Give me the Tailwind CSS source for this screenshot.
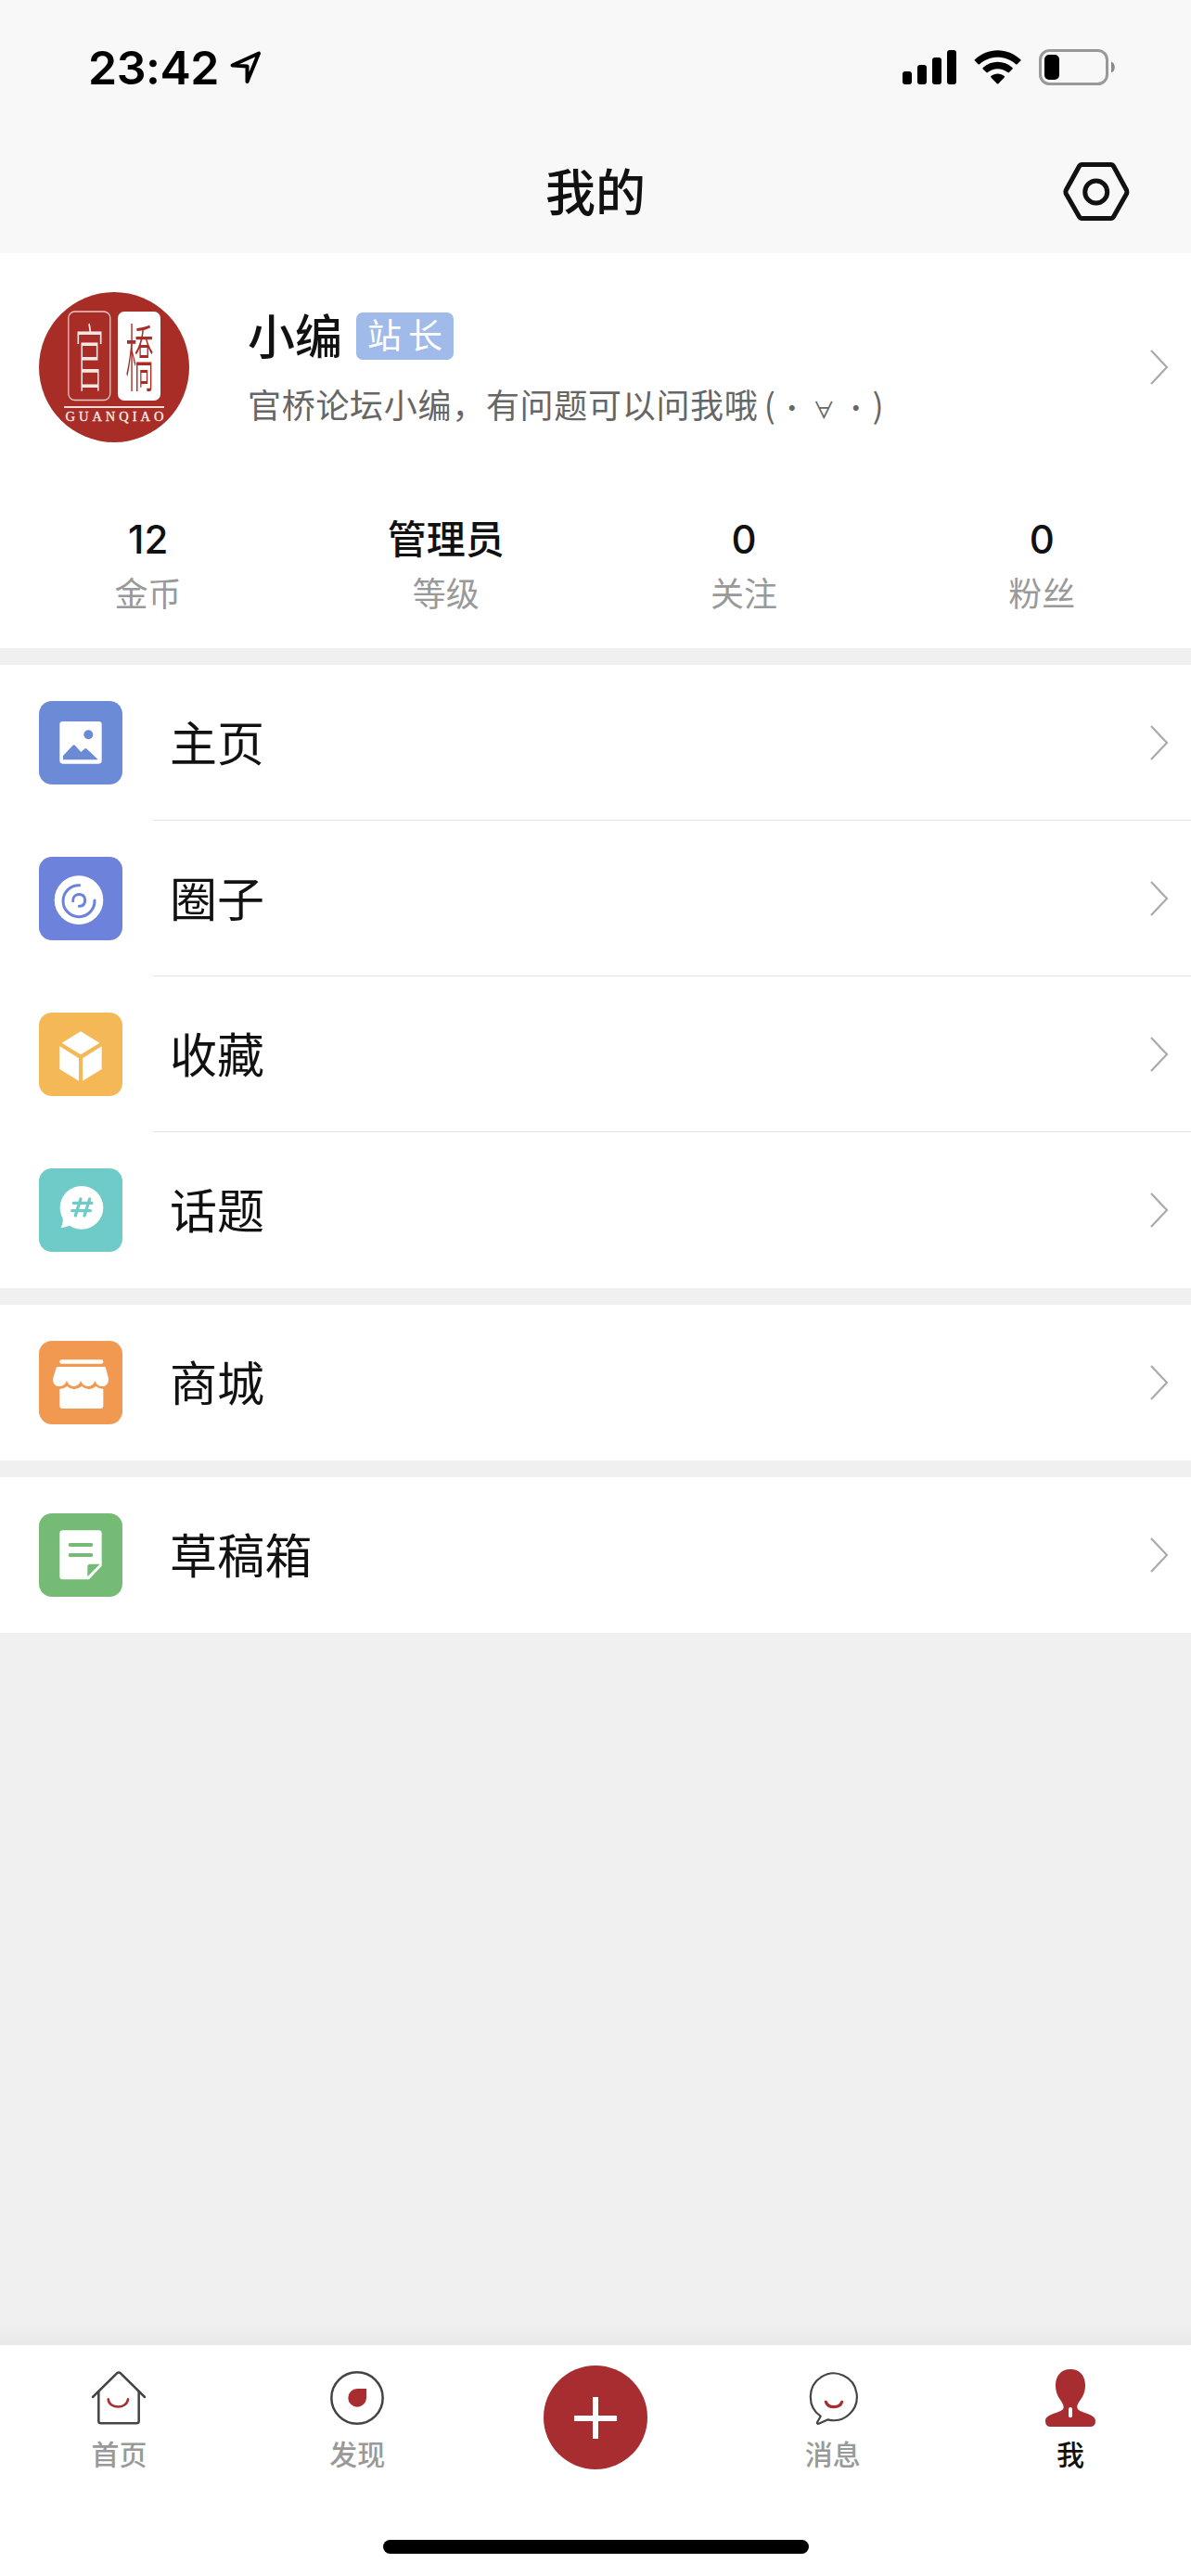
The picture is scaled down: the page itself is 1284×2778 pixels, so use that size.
<!DOCTYPE html>
<html lang="zh-CN">
<head>
  <meta charset="UTF-8" />
  <meta name="viewport" content="width=device-width, initial-scale=1.0" />
  <title>我的</title>
  <script src="https://cdn.jsdelivr.net/npm/@tailwindcss/browser@4"></script>
</head>
<body class="w-[1284px] h-[2778px] flex flex-col overflow-hidden bg-[#f0f0f0] text-[#111111] font-['Inter','Noto_Sans_CJK_SC',sans-serif]">

  <!-- Status bar + title -->
  <header class="h-[273px] shrink-0 bg-[#f8f8f8]">
    <div class="h-[141px] flex justify-between items-start pt-[53px] pl-[95px] pr-[81px] text-black">
      <div class="flex items-start">
        <span class="w-[153px] text-[50px] leading-[40px] tracking-[-0.5px] font-semibold whitespace-nowrap">23:42</span>
        <svg class="w-[34px] h-[36px] mt-[2px]" viewBox="0 0 34 36" fill="none" stroke="currentColor" stroke-width="4" stroke-linejoin="round" stroke-linecap="round">
          <path d="M2.5 15.5 31 2.5 18.5 33 18.5 16.5Z" />
        </svg>
      </div>
      <div class="flex items-start">
        <svg class="w-[58px] h-[38px] mt-px" viewBox="0 0 58 38" fill="currentColor">
          <rect x="0" y="23" width="10" height="14" rx="3" />
          <rect x="16" y="16" width="10" height="21" rx="3" />
          <rect x="32" y="8" width="10" height="29" rx="3" />
          <rect x="48" y="0" width="10" height="37" rx="3" />
        </svg>
        <svg class="w-[52px] h-[38px] mt-px ml-[19px]" viewBox="0 0 52 38" fill="currentColor">
          <path d="M.9 10.2C14.8-3.2 36.4-3.2 50.3 10.2Q51 10.900 50.3 11.6L46.6 15.2Q45.9 15.8 45.2 15.2C34.5 5.2 16.7 5.2 6 15.2Q5.3 15.8 4.6 15.2L.9 11.6Q.2 10.9 .9 10.2Z" />
          <path d="M9.7 19.1C18.7 10.7 32.5 10.7 41.5 19.1Q42.2 19.8 41.5 20.5L37.8 24.1Q37.1 24.7 36.4 24.1C30.4 18.9 20.8 18.9 14.8 24.1Q14.1 24.7 13.4 24.1L9.7 20.5Q9 19.8 9.7 19.1Z" />
          <path d="M18.4 28C22.5 24.6 28.7 24.6 32.8 28Q33.5 28.7 32.8 29.4L26.3 36.2Q25.6 36.9 24.9 36.2L18.4 29.4Q17.7 28.7 18.4 28Z" />
        </svg>
        <svg class="w-[83px] h-[39px] ml-[18px]" viewBox="0 0 83 39">
          <rect x="1.5" y="1.5" width="72" height="36" rx="10" fill="none" stroke="#999999" stroke-width="3" />
          <rect x="6" y="6" width="16" height="27" rx="5" fill="#000000" />
          <path d="M78 13.5C83 15 83 24 78 25.5Z" fill="#8a8a8a" />
        </svg>
      </div>
    </div>
    <div class="relative h-[132px] flex items-center justify-center">
      <h1 class="text-[54px] leading-[80px] font-medium mt-[3px]">我的</h1>
      <svg class="absolute right-[66px] top-[33px] w-[72px] h-[66px]" viewBox="0 0 72 66" fill="none" stroke="#111111" stroke-width="5" stroke-linejoin="round">
        <path d="M20.5 3.5H51.5Q53.5 3.5 54.5 5.2L68.5 31Q69.2 33 68.5 35L54.5 59.8Q53.5 61.5 51.5 61.5H20.5Q18.5 61.5 17.5 59.8L3.3 35Q2.5 33 3.3 31L17.5 5.2Q18.5 3.5 20.5 3.5Z" />
        <circle cx="35.7" cy="33" r="12" />
      </svg>
    </div>
  </header>

  <!-- Profile -->
  <section class="h-[426px] shrink-0 bg-white">
    <div class="flex items-center h-[246px] pt-[42px] pb-[42px] pl-[42px] pr-[24px]">
      <svg class="w-[162px] h-[162px] shrink-0" viewBox="0 0 162 162">
        <circle cx="81" cy="81" r="81" fill="#a82d26" />
        <rect x="31.8" y="21" width="45" height="95.5" rx="7" fill="none" stroke="#e9c9c5" stroke-width="1.3" />
        <rect x="85" y="21" width="46" height="96" rx="7" fill="#ffffff" />
        <g font-family="Noto Sans CJK TC" font-weight="300" text-anchor="middle">
          <text transform="translate(54.5 100.500) scale(1 2.550)" font-size="31" fill="#f7e6e4">官</text>
          <text transform="translate(108.500 100.500) scale(.98 2.550)" font-size="31" fill="#a82d26">橋</text>
        </g>
        <path d="M27 124H135" stroke="#f3dedc" stroke-width="1.8" />
        <text x="28.500" y="138.500" font-family="Liberation Serif" font-size="14.500" fill="#f9eeed" stroke="#f9eeed" stroke-width=".3" textLength="106">GUANQIAO</text>
      </svg>
      <div class="ml-[63px] pt-[10px] flex-1">
        <div class="flex items-center h-[51px]">
          <span class="text-[51px] leading-[51px] font-medium pt-[2px]">小编</span>
          <span class="ml-[15px] w-[105px] h-[51px] rounded-[7px] bg-[#a0bbea] text-white text-[37px] leading-[52px] tracking-[7px] pl-[12px] whitespace-nowrap">站长</span>
        </div>
        <p class="mt-[22px] text-[36px] leading-[51px] tracking-[0.7px] text-[#666666] whitespace-nowrap font-['Noto_Sans_CJK_SC',sans-serif]">官桥论坛小编，有问题可以问我哦<span class="inline-block w-[19px] text-right">(</span><span class="inline-block w-[35px] text-center text-[28px]">・</span><span class="inline-block w-[34px] text-center text-[24px]">∀</span><span class="inline-block w-[35px] text-center text-[28px]">・</span>)</p>
      </div>
      <svg class="w-[20px] h-[38px]" viewBox="0 0 20 38" fill="none" stroke="#aaaaaa" stroke-width="2.2"><path d="M1 1 18 19 1 37" /></svg>
    </div>
    <div class="grid grid-cols-4 text-center pt-[36px] -ml-px">
      <div>
        <div class="text-[42px] leading-[54px] font-medium">12</div>
        <div class="text-[36px] leading-[54px] mt-[5px] text-[#999999]">金币</div>
      </div>
      <div>
        <div class="text-[42px] leading-[54px] font-medium">管理员</div>
        <div class="text-[36px] leading-[54px] mt-[5px] text-[#999999]">等级</div>
      </div>
      <div>
        <div class="text-[42px] leading-[54px] font-medium">0</div>
        <div class="text-[36px] leading-[54px] mt-[5px] text-[#999999]">关注</div>
      </div>
      <div>
        <div class="text-[42px] leading-[54px] font-medium">0</div>
        <div class="text-[36px] leading-[54px] mt-[5px] text-[#999999]">粉丝</div>
      </div>
    </div>
  </section>

  <!-- Menu -->
  <section class="mt-[18px] bg-white shrink-0">
    <a class="flex items-center h-[168px] pl-[42px]">
      <svg class="w-[90px] h-[90px] rounded-[14px] bg-[#6c8bd6]" viewBox="0 0 270 270">
        <rect x="67" y="66" width="136" height="137" rx="10" fill="#ffffff" />
        <circle cx="160" cy="109" r="15" fill="#6c8bd6" />
        <path d="M78 190V177L109 144Q113 140 117 144L136 165 147 155Q151 151 155 155L190 188 189 190Z" fill="#6c8bd6" />
      </svg>
      <div class="ml-[33px] flex-1 h-full flex items-center justify-between pr-[24px] border-b border-[#e4e4e4]">
        <span class="ml-[18px] pt-[4px] text-[51px] leading-[60px]">主页</span>
        <svg class="w-[20px] h-[38px]" viewBox="0 0 20 38" fill="none" stroke="#aaaaaa" stroke-width="2.2"><path d="M1 1 18 19 1 37" /></svg>
      </div>
    </a>
    <a class="flex items-center h-[168px] pl-[42px]">
      <svg class="w-[90px] h-[90px] rounded-[14px] bg-[#6d82da]" viewBox="0 0 270 270" fill="none" stroke="#6d82da" stroke-width="9" stroke-linecap="round">
        <circle cx="129" cy="140" r="79" fill="#ffffff" stroke="none" />
        <path d="M131 92A51 51 0 1 0 180 141" />
        <path d="M110 143C108 116 149 113 149 140Q149 159 130 160" />
      </svg>
      <div class="ml-[33px] flex-1 h-full flex items-center justify-between pr-[24px] border-b border-[#e4e4e4]">
        <span class="ml-[18px] pt-[4px] text-[51px] leading-[60px]">圈子</span>
        <svg class="w-[20px] h-[38px]" viewBox="0 0 20 38" fill="none" stroke="#aaaaaa" stroke-width="2.2"><path d="M1 1 18 19 1 37" /></svg>
      </div>
    </a>
    <a class="flex items-center h-[168px] pl-[42px]">
      <svg class="w-[90px] h-[90px] rounded-[14px] bg-[#f4b956]" viewBox="0 0 270 270" fill="#ffffff">
        <path d="M135 61 196 98 135 136 74 98Z" />
        <path d="M67 109 129 148V221L67 183Z" />
        <path d="M141 148 203 109V183L141 221Z" />
      </svg>
      <div class="ml-[33px] flex-1 h-full flex items-center justify-between pr-[24px] border-b border-[#e4e4e4]">
        <span class="ml-[18px] pt-[4px] text-[51px] leading-[60px]">收藏</span>
        <svg class="w-[20px] h-[38px]" viewBox="0 0 20 38" fill="none" stroke="#aaaaaa" stroke-width="2.2"><path d="M1 1 18 19 1 37" /></svg>
      </div>
    </a>
    <a class="flex items-center h-[168px] pl-[42px]">
      <svg class="w-[90px] h-[90px] rounded-[14px] bg-[#6ecbc7]" viewBox="0 0 270 270">
        <circle cx="138" cy="127" r="70" fill="#ffffff" />
        <path d="M77 160Q79 176 71 193 85 190 100 185L110 165Z" fill="#ffffff" />
        <path d="M135 99 118 153M164 99 147 153M112 112H171M107 137H166" fill="none" stroke="#6ecbc7" stroke-width="10" stroke-linecap="round" />
      </svg>
      <div class="ml-[33px] flex-1 h-full flex items-center justify-between pr-[24px]">
        <span class="ml-[18px] pt-[3px] text-[51px] leading-[60px]">话题</span>
        <svg class="w-[20px] h-[38px]" viewBox="0 0 20 38" fill="none" stroke="#aaaaaa" stroke-width="2.2"><path d="M1 1 18 19 1 37" /></svg>
      </div>
    </a>
  </section>

  <section class="mt-[18px] bg-white shrink-0">
    <a class="flex items-center h-[168px] pl-[42px]">
      <svg class="w-[90px] h-[90px] rounded-[14px] bg-[#f19950]" viewBox="0 0 270 270" fill="#ffffff">
        <rect x="67" y="61" width="141" height="13" rx="6" />
        <path d="M57 84H215L225 122C227 153 189 156 181 128 175 153 143 153 135 128 128 153 97 153 90 128 81 156 43 153 45 122Z" />
        <path d="M67 156Q80 156 91 147 113 166 138 147 163 166 184 147 195 156 208 156V210Q208 219 199 219H76Q67 219 67 210Z" />
      </svg>
      <div class="ml-[33px] flex-1 h-full flex items-center justify-between pr-[24px]">
        <span class="ml-[18px] pt-[3px] text-[51px] leading-[60px]">商城</span>
        <svg class="w-[20px] h-[38px]" viewBox="0 0 20 38" fill="none" stroke="#aaaaaa" stroke-width="2.2"><path d="M1 1 18 19 1 37" /></svg>
      </div>
    </a>
  </section>

  <section class="mt-[18px] bg-white shrink-0">
    <a class="flex items-center h-[168px] pl-[42px]">
      <svg class="w-[90px] h-[90px] rounded-[14px] bg-[#76bb75]" viewBox="0 0 270 270">
        <path d="M77 55H193Q203 55 203 65V170L162 214H77Q67 214 67 204V65Q67 55 77 55Z" fill="#ffffff" />
        <path d="M157 205V173Q157 164 166 164H197Z" fill="#76bb75" />
        <path d="M101 102H169M101 135H169" fill="none" stroke="#76bb75" stroke-width="12" stroke-linecap="round" />
      </svg>
      <div class="ml-[33px] flex-1 h-full flex items-center justify-between pr-[24px]">
        <span class="ml-[18px] pt-[3px] text-[51px] leading-[60px] tracking-[0.3px]">草稿箱</span>
        <svg class="w-[20px] h-[38px]" viewBox="0 0 20 38" fill="none" stroke="#aaaaaa" stroke-width="2.2"><path d="M1 1 18 19 1 37" /></svg>
      </div>
    </a>
  </section>

  <!-- Tab bar -->
  <div class="mt-auto h-[24px] shrink-0 bg-linear-to-b from-[#f0f0f0] to-[#e9e9e9]"></div>
  <nav class="h-[249px] shrink-0 bg-white flex flex-col items-center justify-between pb-[24px]">
    <div class="w-full grid grid-cols-5 text-center text-[30px] leading-[40px] font-medium text-[#999999]">
      <a class="flex flex-col items-center pt-[26px]">
        <svg class="w-[60px] h-[62px]" viewBox="0 0 180 186" fill="none" stroke="#444444" stroke-width="7.5" stroke-linecap="round" stroke-linejoin="round">
          <path d="M6 90 84 13Q90 8 96 13L174 90" />
          <path d="M25 73V168Q25 175 32 175H148Q155 175 155 168V73" />
          <path d="M56 97C59 130 116 130 120 97" stroke="#a82d31" />
        </svg>
        <span class="mt-[10px]">首页</span>
      </a>
      <a class="flex flex-col items-center pt-[26px]">
        <svg class="w-[60px] h-[62px]" viewBox="0 0 180 186">
          <circle cx="90" cy="93" r="83" fill="none" stroke="#444444" stroke-width="7.5" />
          <path d="M90 63H120V93A29.5 29.5 0 1 1 90 63Z" fill="#a82d31" />
        </svg>
        <span class="mt-[10px]">发现</span>
      </a>
      <a class="flex flex-col items-center pt-[22px]">
        <svg class="w-[112px] h-[112px]" viewBox="0 0 112 112">
          <circle cx="56" cy="56" r="56" fill="#a82d31" />
          <path d="M33 57H79M56 34V79" stroke="#ffffff" stroke-width="6" />
        </svg>
      </a>
      <a class="flex flex-col items-center pt-[26px] pr-[2px]">
        <svg class="w-[60px] h-[62px]" viewBox="0 0 180 186" fill="none" stroke-linecap="round" stroke-linejoin="round">
          <path d="M50 152A75 76 0 1 1 74 163L44 176Q36 178 40 170Z" stroke="#444444" stroke-width="6.5" />
          <path d="M67 106C75 127 112 127 119 106" stroke="#a82d31" stroke-width="9.5" />
        </svg>
        <span class="mt-[10px]">消息</span>
      </a>
      <a class="flex flex-col items-center pt-[26px] pr-[3px] text-[#111111]">
        <svg class="w-[60px] h-[62px]" viewBox="0 0 180 186">
          <path d="M90 0C121 0 138 22 138 52 138 94 112 103 112 123 112 143 171 141 171 167Q171 186 153 186H27Q9 186 9 167C9 141 68 143 68 123 68 103 42 94 42 52 42 22 59 0 90 0Z" fill="#a82d31" />
          <rect x="84" y="123" width="12" height="34" rx="6" fill="#ffffff" />
        </svg>
        <span class="mt-[10px]">我</span>
      </a>
    </div>
    <div class="w-[459px] h-[15px] rounded-full bg-black"></div>
  </nav>

</body>
</html>
